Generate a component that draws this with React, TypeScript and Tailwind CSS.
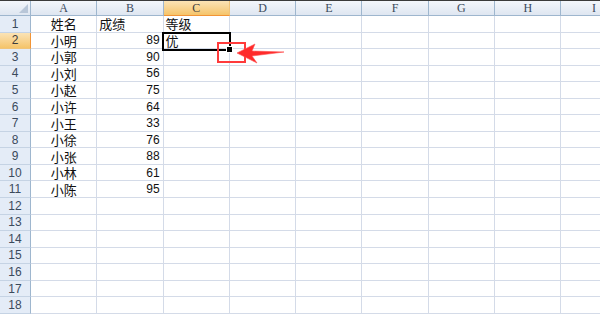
const COLS = ["A", "B", "C", "D", "E", "F", "G", "H", "I"];

// rows 1..11: [A, B, C]
const DATA: [string, string, string][] = [
  ["姓名", "成绩", "等级"],
  ["小明", "89", "优"],
  ["小郭", "90", ""],
  ["小刘", "56", ""],
  ["小赵", "75", ""],
  ["小许", "64", ""],
  ["小王", "33", ""],
  ["小徐", "76", ""],
  ["小张", "88", ""],
  ["小林", "61", ""],
  ["小陈", "95", ""],
];

const cjk = "font-['SimSun','Noto_Sans_CJK_SC',sans-serif]";

function HeaderRow() {
  return (
    <div className="flex h-[16px] border-t border-[#3a3a3a] bg-gradient-to-b from-[#f3f6fb] to-[#dde5f0]">
      <div className="flex w-[31px] shrink-0 items-end justify-end border-r border-b border-[#9eb6ce] p-[2px]">
        <div className="h-[9px] w-[9px] bg-[#b8c6d8] [clip-path:polygon(100%_0,100%_100%,0_100%)]" />
      </div>
      {COLS.map((c) => {
        const active = c === "C";
        return (
          <div
            key={c}
            className={
              "w-[66.3px] shrink-0 flex items-center justify-center border-r border-b font-['Liberation_Serif',serif] text-[12px] " +
              (active
                ? "bg-gradient-to-b from-[#fbe3b5] to-[#f5c469] border-b-[#f29436] border-r-[#f0c47a] text-[#3d3d3d]"
                : "border-[#9eb6ce] text-[#3b4a5c]")
            }
          >
            {c}
          </div>
        );
      })}
    </div>
  );
}

function Row({ n }: { n: number }) {
  const d = DATA[n - 1];
  const active = n === 2;
  return (
    <div className="flex h-[16.55px]">
      <div
        className={
          "w-[31px] shrink-0 flex items-center justify-center border-r border-b font-['Liberation_Sans',sans-serif] text-[12px] " +
          (active
            ? "bg-gradient-to-b from-[#fbe3b5] to-[#f5c469] border-r-[#f29436] border-b-[#f0c47a] text-[#3d3d3d]"
            : "bg-[#e4ecf7] border-r-[#9eb6ce] border-b-[#c5d3e4] text-[#3b4a5c]")
        }
      >
        {n}
      </div>
      {COLS.map((c, i) => {
        let content: React.ReactNode = null;
        let align = "justify-start pl-[2px]";
        let font = cjk + " text-[13px]";
        if (d && i === 0) {
          content = d[0];
          align = "justify-center";
        } else if (d && i === 1) {
          content = d[1];
          if (n > 1) {
            align = "justify-end pr-[3px]";
            font = "font-['Liberation_Sans',sans-serif] text-[12px]";
          }
        } else if (d && i === 2) {
          content = d[2];
        }
        return (
          <div
            key={c}
            className={
              "w-[66.3px] shrink-0 flex items-center whitespace-nowrap border-r border-b border-[#d4dbe8] text-[#111] leading-none " +
              align +
              " " +
              font
            }
          >
            {content}
          </div>
        );
      })}
    </div>
  );
}

export default function App() {
  const rows = Array.from({ length: 18 }, (_, i) => i + 1);
  return (
    <div className="relative h-[314px] w-[600px] overflow-hidden bg-white">
      <HeaderRow />
      {rows.map((n) => (
        <Row key={n} n={n} />
      ))}

      {/* active cell C2 with fill handle */}
      <div className="absolute left-[162px] top-[32px] h-[19px] w-[69px] border-2 border-black" />
      <div className="absolute left-[226px] top-[46px] h-[7px] w-[7px] border border-white bg-black" />

      {/* red marker box */}
      <div className="absolute left-[217px] top-[42px] h-[21px] w-[29px] border-2 border-[#ff3b3b]" />

      {/* red arrow */}
      <svg className="absolute left-0 top-0" width="600" height="314" viewBox="0 0 600 314">
        <polygon
          points="237,53 255,44 252,51 284,52 252,56 257,63"
          fill="#ff2a2a"
          stroke="#ff5050"
          strokeWidth="0.6"
          strokeLinejoin="round"
        />
      </svg>
    </div>
  );
}
